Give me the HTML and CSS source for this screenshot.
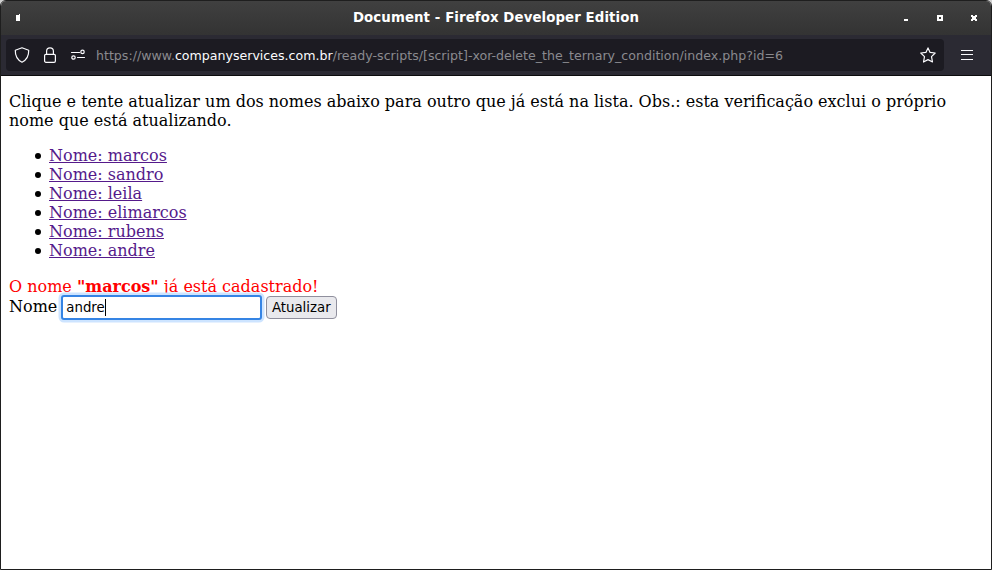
FILE: index.html
```html
<!DOCTYPE html>
<html lang="pt-BR">
<head>
<meta charset="utf-8">
<title>Document</title>
<link rel="stylesheet" href="styles.css">
</head>
<body>
<div class="window">
  <header class="titlebar">
    <svg class="pin" width="4" height="8" viewBox="0 0 4 8" shape-rendering="crispEdges"><path d="M0 1h3V0h1v7H0z" fill="#fff"/></svg>
    <span class="title">Document - Firefox Developer Edition</span>
    <div class="controls">
      <svg width="4" height="6" viewBox="0 0 4 6" shape-rendering="crispEdges"><path d="M0 4h4v2H0z" fill="#fff"/></svg>
      <svg width="6" height="6" viewBox="0 0 6 6" shape-rendering="crispEdges"><path fill-rule="evenodd" d="M0 0h6v6H0zM2 2v2h2V2z" fill="#fff"/></svg>
      <svg width="6" height="6" viewBox="0 0 6 6" shape-rendering="crispEdges"><path d="M0 0h2v1h2V0h2v2H5v2h1v2H4V5H2v1H0V4h1V2H0z" fill="#fff"/></svg>
    </div>
  </header>
  <nav class="toolbar">
    <div class="urlbar">
      <svg class="icon" viewBox="0 0 16 16"><path d="M8 .8 14.700 3.200c.2 5.800-2 9.600-6.700 12C3.300 12.800 1.100 9 1.300 3.200z"/></svg>
      <svg class="icon" viewBox="0 0 16 16"><rect x="2.600" y="7.300" width="10.800" height="8" rx="1.300"/><path d="M4.600 7V4.200a3.400 3.400 0 0 1 6.800 0V7"/></svg>
      <svg class="icon" viewBox="0 0 16 16"><path d="M1.500 5.500h8M7.500 10.500h7"/><circle cx="12.500" cy="4.900" r="1.700"/><circle cx="3.500" cy="10.500" r="1.700"/></svg>
      <span class="url">https://www.<b>companyservices.com.br</b>/ready-scripts/[script]-xor-delete_the_ternary_condition/index.php?id=6</span>
      <svg class="icon star" viewBox="0 0 16 16"><path d="M8 .9 10.100 5.400 15.200 6 11.500 9.600 12.500 15 8 12.600 3.500 15 4.500 9.600.8 6 5.900 5.400z"/></svg>
    </div>
    <svg class="menu" width="12" height="10" viewBox="0 0 12 10" shape-rendering="crispEdges"><path d="M0 0h12v1H0zM0 4h12v1H0zM0 9h12v1H0z" fill="#fbfbfe"/></svg>
  </nav>
  <main class="page">
    <p>Clique e tente atualizar um dos nomes abaixo para outro que já está na lista. Obs.: esta verificação exclui o próprio nome que está atualizando.</p>
    <ul>
      <li><a href="#">Nome: marcos</a></li>
      <li><a href="#">Nome: sandro</a></li>
      <li><a href="#">Nome: leila</a></li>
      <li><a href="#">Nome: elimarcos</a></li>
      <li><a href="#">Nome: rubens</a></li>
      <li><a href="#">Nome: andre</a></li>
    </ul>
    <div class="error">O nome <strong>"marcos"</strong> já está cadastrado!</div>
    <form class="form">
      <label>Nome</label>
      <div class="field">andre<i class="caret"></i></div>
      <button type="button">Atualizar</button>
    </form>
  </main>
</div>
</body>
</html>
```
FILE: styles.css
```css
* { box-sizing: border-box; }
body { margin: 0; background: #d0d0d0; }
.window {
  height: 570px;
  display: flex;
  flex-direction: column;
  border: 1px solid #1e1e1e;
  border-radius: 6px 6px 0 0;
  overflow: hidden;
  background: #fff;
}
.titlebar {
  height: 34px;
  flex: none;
  display: grid;
  grid-template-columns: 100px 1fr 100px;
  align-items: center;
  padding: 0 14px;
  background: linear-gradient(#404040, #333);
  color: #fff;
  font: bold 13.330px/16px "DejaVu Sans", sans-serif;
}
.pin { margin-left: 1px; }
.title { text-align: center; letter-spacing: 0.090px; }
.controls { display: flex; justify-content: flex-end; align-items: center; gap: 28px; }
.controls svg:first-child { margin-right: 1px; }
.toolbar {
  height: 41px;
  flex: none;
  display: flex;
  align-items: center;
  padding: 0 18px 1px 5px;
  border-bottom: 1px solid #0c0c0d;
  background: #2b2a33;
}
.urlbar {
  width: 938px;
  height: 32px;
  display: flex;
  align-items: center;
  padding: 0 8px;
  border-radius: 4px;
  background: #1c1b22;
}
.icon {
  width: 16px;
  height: 16px;
  flex: none;
  margin-right: 12px;
  fill: none;
  stroke: #fbfbfe;
  stroke-width: 1.200;
  stroke-linejoin: round;
  stroke-linecap: round;
}
.icon.star { margin: 0 0 0 auto; }
.url {
  margin-left: -2px;
  padding-top: 2px;
  color: #8a8a8f;
  font: 12.600px/16px "DejaVu Sans", sans-serif;
  white-space: nowrap;
}
.url b { font-weight: normal; color: #fbfbfe; }
.menu { margin-left: 17px; }
.page {
  flex: 1;
  padding: 16px 8px;
  color: #000;
  font: 16px/19px "DejaVu Serif", serif;
}
.page p { margin: 0 0 16px; }
.page ul { margin: 0 0 17px; padding-left: 40px; }
.page li { list-style: none; display: flex; align-items: center; }
.page li::before {
  content: "";
  width: 6px;
  height: 6px;
  margin: 1px 8px 0 -14px;
  border-radius: 50%;
  background: #000;
}
.page a { color: #551a8b; }
.error { color: #f00; }
.form { display: flex; align-items: center; margin-top: -1px; }
.form label { margin-top: -2px; }
.field {
  width: 201px;
  height: 25px;
  display: flex;
  align-items: center;
  margin: 0 4px;
  padding: 0 3px 1px;
  border: 2px solid #3584e4;
  border-radius: 3px;
  box-shadow: 0 0 0 2.500px #cde4ff;
  background: #fff;
  font: 13.330px/17px "DejaVu Sans", sans-serif;
}
.caret { width: 1px; height: 17px; background: #000; }
button {
  width: 71px;
  height: 23px;
  padding: 0 1px 1px 0;
  border: 1px solid #8f8f9d;
  border-radius: 4px;
  background: #e9e9ed;
  color: #000;
  font: 13.330px/17px "DejaVu Sans", sans-serif;
}
```
